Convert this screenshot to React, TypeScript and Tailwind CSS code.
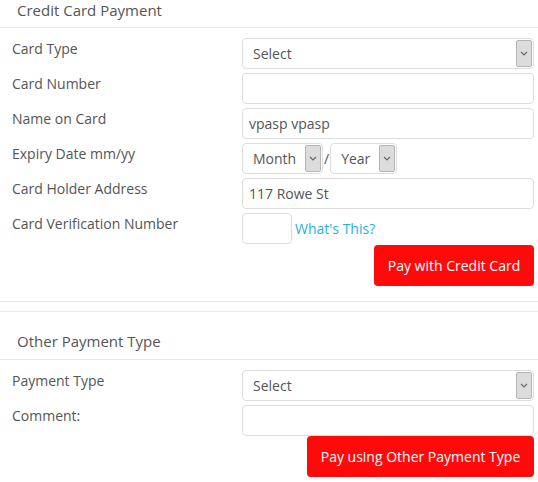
import React from "react";

const font = { fontFamily: '"Open Sans", "Liberation Sans", sans-serif' };

function Arrow() {
  return (
    <div className="absolute right-[1px] top-[1px] bottom-[1px] w-[16px] bg-[#dcdcdc] border border-[#b5b5b5] rounded-[2px] flex items-center justify-center">
      <svg width="8" height="5" viewBox="0 0 8 5" fill="none">
        <path d="M1 1l3 3 3-3" stroke="#666" strokeWidth="1.1" />
      </svg>
    </div>
  );
}

function Select({ text, className }: { text: string; className: string }) {
  return (
    <div className={`relative h-[31px] border border-[#dedede] rounded-[4px] bg-white flex items-center pl-[10px] text-[14px] text-[#555] ${className}`}>
      {text}
      <Arrow />
    </div>
  );
}

function Input({ value = "", className = "w-full" }: { value?: string; className?: string }) {
  return (
    <div className={`h-[31px] border border-[#dedede] rounded-[4px] bg-white flex items-center pl-[6px] text-[14px] text-[#555] ${className}`}>
      {value}
    </div>
  );
}

function Row({ label, children }: { label: string; children: React.ReactNode }) {
  return (
    <div className="flex mb-[4px]">
      <div className="w-[242px] pl-3 pt-[1px] text-[14px] leading-5 text-[#555]">{label}</div>
      <div className="flex-1 pr-1 flex items-center">{children}</div>
    </div>
  );
}

function Header({ title, className = "" }: { title: string; className?: string }) {
  return (
    <div className={`border-b border-[#e8e8e8] pl-[17px] text-[15px] text-[#555] flex items-end ${className}`}>
      {title}
    </div>
  );
}

export default function App() {
  return (
    <div className="w-[538px] h-[482px] bg-white overflow-hidden" style={font}>
      <Header title="Credit Card Payment" className="h-[28px] pb-[6px]" />
      <div className="pt-[10px]">
        <Row label="Card Type">
          <Select text="Select" className="w-full" />
        </Row>
        <Row label="Card Number">
          <Input />
        </Row>
        <Row label="Name on Card">
          <Input value="vpasp vpasp" />
        </Row>
        <Row label="Expiry Date mm/yy">
          <Select text="Month" className="w-[81px]" />
          <span className="text-[14px] text-[#555] mx-[1px]">/</span>
          <Select text="Year" className="w-[67px] pl-[8px]" />
        </Row>
        <Row label="Card Holder Address">
          <Input value="117 Rowe St" />
        </Row>
        <Row label="Card Verification Number">
          <Input className="w-[50px]" />
          <a className="ml-[3px] text-[14px] text-[#1cb2ea]">What's This?</a>
        </Row>
        <div className="flex justify-end pr-1 -mt-[3px]">
          <button className="h-[41px] w-[160px] rounded-[4px] bg-[#ff0a0a] text-white text-[14px]">
            Pay with Credit Card
          </button>
        </div>
      </div>
      <div className="mt-[15px] border-t border-[#e6e6e6]" />
      <div className="mt-[9px] border-t border-[#ebebeb]" />
      <Header title="Other Payment Type" className="h-[48px] pb-[7px]" />
      <div className="pt-[10px]">
        <Row label="Payment Type">
          <Select text="Select" className="w-full" />
        </Row>
        <Row label="Comment:">
          <Input />
        </Row>
        <div className="flex justify-end pr-1 -mt-[4px]">
          <button className="h-[41px] w-[227px] rounded-[4px] bg-[#ff0a0a] text-white text-[14px]">
            Pay using Other Payment Type
          </button>
        </div>
      </div>
    </div>
  );
}
